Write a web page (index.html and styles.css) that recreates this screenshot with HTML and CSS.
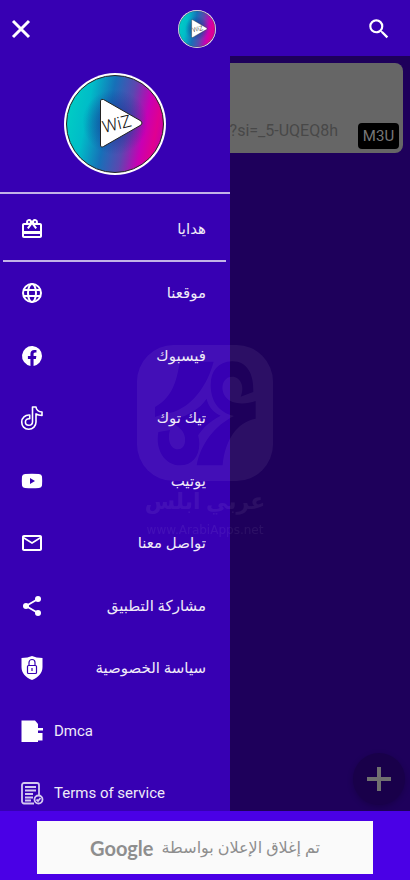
FILE: index.html
```
<!DOCTYPE html>
<html lang="ar">
<head>
  <meta charset="UTF-8" />
  <meta name="viewport" content="width=device-width, initial-scale=1" />
  <title>WiZ</title>
  <link rel="stylesheet" href="styles.css">
</head>
<body>
  <svg class="defs" aria-hidden="true">
    <defs>
      <linearGradient id="disc" x1="0" y1="0.4" x2="1" y2="0.6">
        <stop offset="0" stop-color="#00cdc4" />
        <stop offset="0.2" stop-color="#00bcc8" />
        <stop offset="0.42" stop-color="#1670b8" />
        <stop offset="0.62" stop-color="#5a48b0" />
        <stop offset="0.8" stop-color="#c800b4" />
        <stop offset="0.92" stop-color="#e00090" />
        <stop offset="1" stop-color="#c800a8" />
      </linearGradient>
      <radialGradient id="glow" cx="0.5" cy="0.48" r="0.34">
        <stop offset="0" stop-color="#103090" stop-opacity="0.8" />
        <stop offset="1" stop-color="#103090" stop-opacity="0" />
      </radialGradient>
      <symbol id="logo" viewBox="0 0 102 102">
        <circle cx="51" cy="51" r="51" fill="#fff" />
        <circle cx="51" cy="51" r="48.5" fill="url(#disc)" stroke="#222" stroke-width="1" />
        <circle cx="51" cy="51" r="48" fill="url(#glow)" />
        <path d="M36.500 28v44q0 3 3 1.500L77 52q2-2 0-4L39.500 26.500q-3-1-3 1.500z" fill="#fff" stroke="#222" stroke-width="1" />
        <text class="logo-text" x="40" y="60" transform="rotate(-14 40 60)">WiZ</text>
      </symbol>
    </defs>
  </svg>

  <header class="topbar">
    <button class="close-btn" type="button" aria-label="إغلاق">
      <svg width="24" height="24" viewBox="0 0 24 24"><path d="M4 4l16 16M20 4L4 20" fill="none" stroke="#fff" stroke-width="3" /></svg>
    </button>
    <svg class="topbar-logo" role="img" aria-label="WiZ"><use href="#logo" /></svg>
    <button class="search-btn" type="button" aria-label="بحث">
      <svg width="26" height="26" viewBox="0 0 24 24"><path fill="#fff" d="M15.500 14h-.79l-.28-.27A6.470 6.470 0 0 0 16 9.500 6.500 6.500 0 1 0 9.500 16c1.610 0 3.090-.59 4.230-1.570l.27.28v.79l5 4.990L20.490 19l-4.990-5zm-6 0C7.010 14 5 11.990 5 9.500S7.010 5 9.500 5 14 7.010 14 9.500 11.990 14 9.500 14z" /></svg>
    </button>
  </header>

  <div class="stage">
    <main class="content">
      <article class="card">
        <p class="card-url">?si=_5-UQEQ8h</p>
        <span class="card-tag">M3U</span>
      </article>
    </main>
    <button class="fab" type="button" aria-label="إضافة">
      <svg width="24" height="24" viewBox="0 0 24 24"><path d="M12 0v24M0 12h24" stroke="#707070" stroke-width="4" /></svg>
    </button>

    <nav class="drawer">
      <div class="drawer-head">
        <svg class="drawer-logo" role="img" aria-label="WiZ"><use href="#logo" /></svg>
      </div>
      <a class="item item-gift" href="#">
        <svg class="icon" viewBox="0 0 24 24"><path fill="currentColor" d="M20 6h-2.180c.11-.31.18-.65.18-1a3 3 0 0 0-5.500-1.650l-.5.670-.5-.68A3 3 0 0 0 6 5c0 .35.070.69.180 1H4c-1.110 0-1.990.89-1.990 2L2 19c0 1.110.89 2 2 2h16c1.110 0 2-.89 2-2V8c0-1.110-.89-2-2-2zm-5-2a1 1 0 1 1 0 2 1 1 0 0 1 0-2zM9 4a1 1 0 1 1 0 2 1 1 0 0 1 0-2zm11 15H4v-2h16v2zm0-5H4V8h5.080L7 10.830 8.620 12 12 7.400l3.380 4.600L17 10.830 14.920 8H20v6z" /></svg>
        <span class="label" dir="rtl">هدايا</span>
      </a>
      <div class="menu">
        <a class="item" href="#">
          <svg class="icon" viewBox="0 0 24 24"><g fill="none" stroke="currentColor" stroke-width="2"><circle cx="12" cy="12" r="9" /><ellipse cx="12" cy="12" rx="4" ry="9" /><path d="M3.500 9h17M3.500 15h17" /></g></svg>
          <span class="label" dir="rtl">موقعنا</span>
        </a>
        <a class="item" href="#">
          <svg class="icon" viewBox="0 0 24 24"><path fill="currentColor" d="M22 12a10 10 0 1 0-11.560 9.880v-6.990H7.900V12h2.540V9.800c0-2.510 1.490-3.890 3.780-3.890 1.090 0 2.240.19 2.240.19v2.460H15.200c-1.240 0-1.630.77-1.630 1.560V12h2.780l-.45 2.890h-2.330v6.990A10 10 0 0 0 22 12z" /></svg>
          <span class="label" dir="rtl">فيسبوك</span>
        </a>
        <a class="item" href="#">
          <svg class="icon" viewBox="0 0 24 24"><path d="M12.500 1H16c.3 3 2 4.700 6 5v3.500c-2.500 0-4.500-.6-6-1.600V16c0 4-3 7.200-7.300 7.200s-7-3.200-7-7.200c0-4.200 3.500-7.300 8-6.900v3.700c-2.500-.4-4.300 1-4.300 3.200 0 1.900 1.500 3.300 3.300 3.300 2.200 0 3.800-1.500 3.800-3.600z" fill="none" stroke="currentColor" stroke-width="1.600" stroke-linejoin="round" /></svg>
          <span class="label" dir="rtl">تيك توك</span>
        </a>
        <a class="item" href="#">
          <svg class="icon" viewBox="0 0 24 24"><path fill="currentColor" fill-rule="evenodd" d="M5 5q7-.6 14 0 2.700.2 3 2.500.4 4.500 0 9-.3 2.300-3 2.500-7 .6-14 0-2.700-.2-3-2.500-.4-4.500 0-9Q2.300 5.200 5 5zM10 9v6l5-3z" /></svg>
          <span class="label" dir="rtl">يوتيب</span>
        </a>
        <a class="item" href="#">
          <svg class="icon" viewBox="0 0 24 24"><path fill="currentColor" d="M22 6c0-1.100-.9-2-2-2H4c-1.100 0-2 .9-2 2v12c0 1.100.9 2 2 2h16c1.100 0 2-.9 2-2V6zm-2 0l-8 5-8-5h16zm0 12H4V8l8 5 8-5v10z" /></svg>
          <span class="label" dir="rtl">تواصل معنا</span>
        </a>
        <a class="item" href="#">
          <svg class="icon" viewBox="0 0 24 24"><g fill="currentColor"><path d="M6 12l12-7M6 12l12 7" stroke="currentColor" stroke-width="2" /><circle cx="6" cy="12" r="3" /><circle cx="18" cy="5" r="3" /><circle cx="18" cy="19" r="3" /></g></svg>
          <span class="label" dir="rtl">مشاركة التطبيق</span>
        </a>
        <a class="item" href="#">
          <svg class="icon" viewBox="0 0 24 24"><path fill="currentColor" d="M12 0q4 2 10.500 2v9c0 6-4 10.500-10.500 13C5.500 21.500 1.500 17 1.500 11V2Q8 2 12 0z" /><g fill="none" stroke="#3700b3" stroke-width="1.200"><rect x="7.500" y="9.500" width="9" height="8" rx="1" /><path d="M9 9.500V6.500a3 3 0 0 1 6 0v3M12 12v3" /></g></svg>
          <span class="label" dir="rtl">سياسة الخصوصية</span>
        </a>
        <a class="item" href="#">
          <svg class="icon" viewBox="0 0 24 24"><path fill="currentColor" d="M1.500 1.500H15L18 5v4h5v2.500h-5V14h4.500v7.500H18v1.500H1.500z" /></svg>
          <span class="label label-latin">Dmca</span>
        </a>
        <a class="item" href="#">
          <svg class="icon icon-dim" viewBox="0 0 24 24"><g fill="none" stroke="currentColor" stroke-width="1.800"><path d="M14 22.500H4a2 2 0 0 1-2-2V4a2 2 0 0 1 2-2h13a2 2 0 0 1 2 2v10M5 6h11M5 9.500h11M5 13h8M5 16.500h8M5 19.500h6" /><circle cx="18.500" cy="18.500" r="4" /><path d="M16.500 18.500l1.500 1.500 2.500-3" /></g></svg>
          <span class="label label-latin">Terms of service</span>
        </a>
      </div>
    </nav>
  </div>

  <footer class="ad">
    <div class="ad-box">
      <span class="ad-brand">Google</span>
      <span class="ad-text" dir="rtl">تم إغلاق الإعلان بواسطة</span>
    </div>
  </footer>

  <div class="watermark" aria-hidden="true">
    <svg width="136" height="136" viewBox="21 29 408 408">
      <mask id="cut">
        <rect x="21" y="29" width="408" height="408" rx="110" fill="#fff" />
        <!-- upper blade -->
        <path d="M150 79H251C232 150 190 205 140 226C115 236 90 238 75 245V215C135 180 140 125 150 79z" fill="#000" />
        <!-- hook running down into the lower blade -->
        <path d="M305 78C350 76 372 115 370 170L332 184C345 155 332 124 306 124C280 124 268 158 287 185C305 208 345 208 377 197V250C320 260 285 315 278 390H200C212 325 255 270 312 242C265 232 242 195 242 150C242 105 265 80 305 78z" fill="#000" />
        <!-- point between the blades -->
        <path d="M230 190C235 215 252 232 272 241C235 260 210 285 194 318C190 285 165 262 138 250C175 240 210 220 230 190z" fill="#000" />
        <!-- lower ring -->
        <path d="M85 290L120 284C112 310 120 342 144 342C168 342 172 305 155 285C145 272 130 264 118 260L150 248C190 262 208 290 208 325C208 365 185 390 150 390C105 390 75 345 85 290z" fill="#000" />
      </mask>
      <rect x="21" y="29" width="408" height="408" fill="#fff" mask="url(#cut)" />
    </svg>
    <strong class="mark-name" dir="rtl">عربي ابلس</strong>
    <span class="mark-url">www.ArabiApps.net</span>
  </div>
</body>
</html>
```
FILE: styles.css
```
:root {
  --primary: #3700b3;
  --accent: #4a00e6;
  --shade: #1e005b;
  --line: #c3b3e8;
}
* {
  box-sizing: border-box;
}
body {
  margin: 0;
  height: 100vh;
  display: flex;
  flex-direction: column;
  position: relative;
  overflow: hidden;
  background: var(--shade);
  color: #fff;
  font-family: Roboto, "DejaVu Sans", sans-serif;
  font-size: 16px;
}
p {
  margin: 0;
}
button {
  display: flex;
  align-items: center;
  justify-content: center;
  padding: 0;
  border: none;
  background: none;
  cursor: pointer;
}
.defs {
  position: absolute;
  width: 0;
  height: 0;
}
.logo-text {
  font-size: 17px;
  font-weight: 300;
  fill: #111;
}

/* top bar */
.topbar {
  flex: none;
  height: 56px;
  display: flex;
  align-items: center;
  justify-content: space-between;
  padding: 1px 9px 0 6px;
  background: var(--primary);
}
.close-btn {
  width: 30px;
  height: 40px;
}
.search-btn {
  width: 44px;
  height: 40px;
}
.topbar-logo {
  width: 38px;
  height: 38px;
}

/* list behind the drawer */
.stage {
  flex: 1;
  min-height: 0;
  position: relative;
  overflow: hidden;
}
.content {
  padding: 7px;
}
.card {
  height: 90px;
  display: flex;
  align-items: flex-end;
  justify-content: flex-end;
  gap: 20px;
  padding: 4px;
  border-radius: 8px;
  background: #666;
}
.card-url {
  line-height: 36px;
  color: #484848;
}
.card-tag {
  width: 41px;
  border-radius: 4px;
  background: #000;
  color: #777;
  font-size: 15px;
  line-height: 26px;
  text-align: center;
}
.fab {
  position: absolute;
  right: 5px;
  bottom: 6px;
  width: 52px;
  height: 52px;
  border-radius: 50%;
  background: #19004a;
  box-shadow: 0 2px 6px rgba(0, 0, 0, 0.2);
}

/* drawer */
.drawer {
  position: absolute;
  top: 0;
  left: 0;
  bottom: 0;
  width: 230px;
  overflow: hidden;
  background: var(--primary);
}
.drawer-head {
  display: flex;
  justify-content: center;
  padding: 17px 0;
  border-bottom: 2px solid var(--line);
}
.drawer-logo {
  width: 102px;
  height: 102px;
}
.item {
  display: flex;
  align-items: center;
  gap: 10px;
  padding: 0 24px 0 20px;
  color: #fff;
  text-decoration: none;
}
.item-gift {
  height: 68px;
  margin: 0 4px 0 3px;
  padding: 4px 20px 0 17px;
  border-bottom: 2px solid var(--line);
}
.menu {
  display: grid;
  grid-auto-rows: 62px 63px;
}
.icon {
  flex: none;
  width: 24px;
  height: 24px;
}
.icon-dim {
  color: #d4c8f0;
}
.label {
  flex: 1;
  color: #efeaf8;
  font-size: 15px;
  font-weight: 500;
}
.label-latin {
  font-weight: 400;
}

/* closed ad strip */
.ad {
  flex: none;
  padding: 10px 37px 6px;
  background: var(--accent);
}
.ad-box {
  height: 53px;
  display: flex;
  align-items: center;
  justify-content: center;
  gap: 8px;
  background: #fafafa;
  color: #8e8e8e;
}
.ad-brand {
  font-family: Lato, sans-serif;
  font-size: 20px;
  font-weight: 700;
}
.ad-text {
  font-size: 16px;
}

/* watermark laid over the whole screen */
.watermark {
  position: absolute;
  top: 345px;
  left: 0;
  right: 0;
  display: flex;
  flex-direction: column;
  align-items: center;
  opacity: 0.06;
  pointer-events: none;
}
.mark-name {
  font-size: 22px;
  line-height: 42px;
}
.mark-url {
  font-family: "DejaVu Sans", sans-serif;
  font-size: 12px;
  line-height: 14px;
}
```
